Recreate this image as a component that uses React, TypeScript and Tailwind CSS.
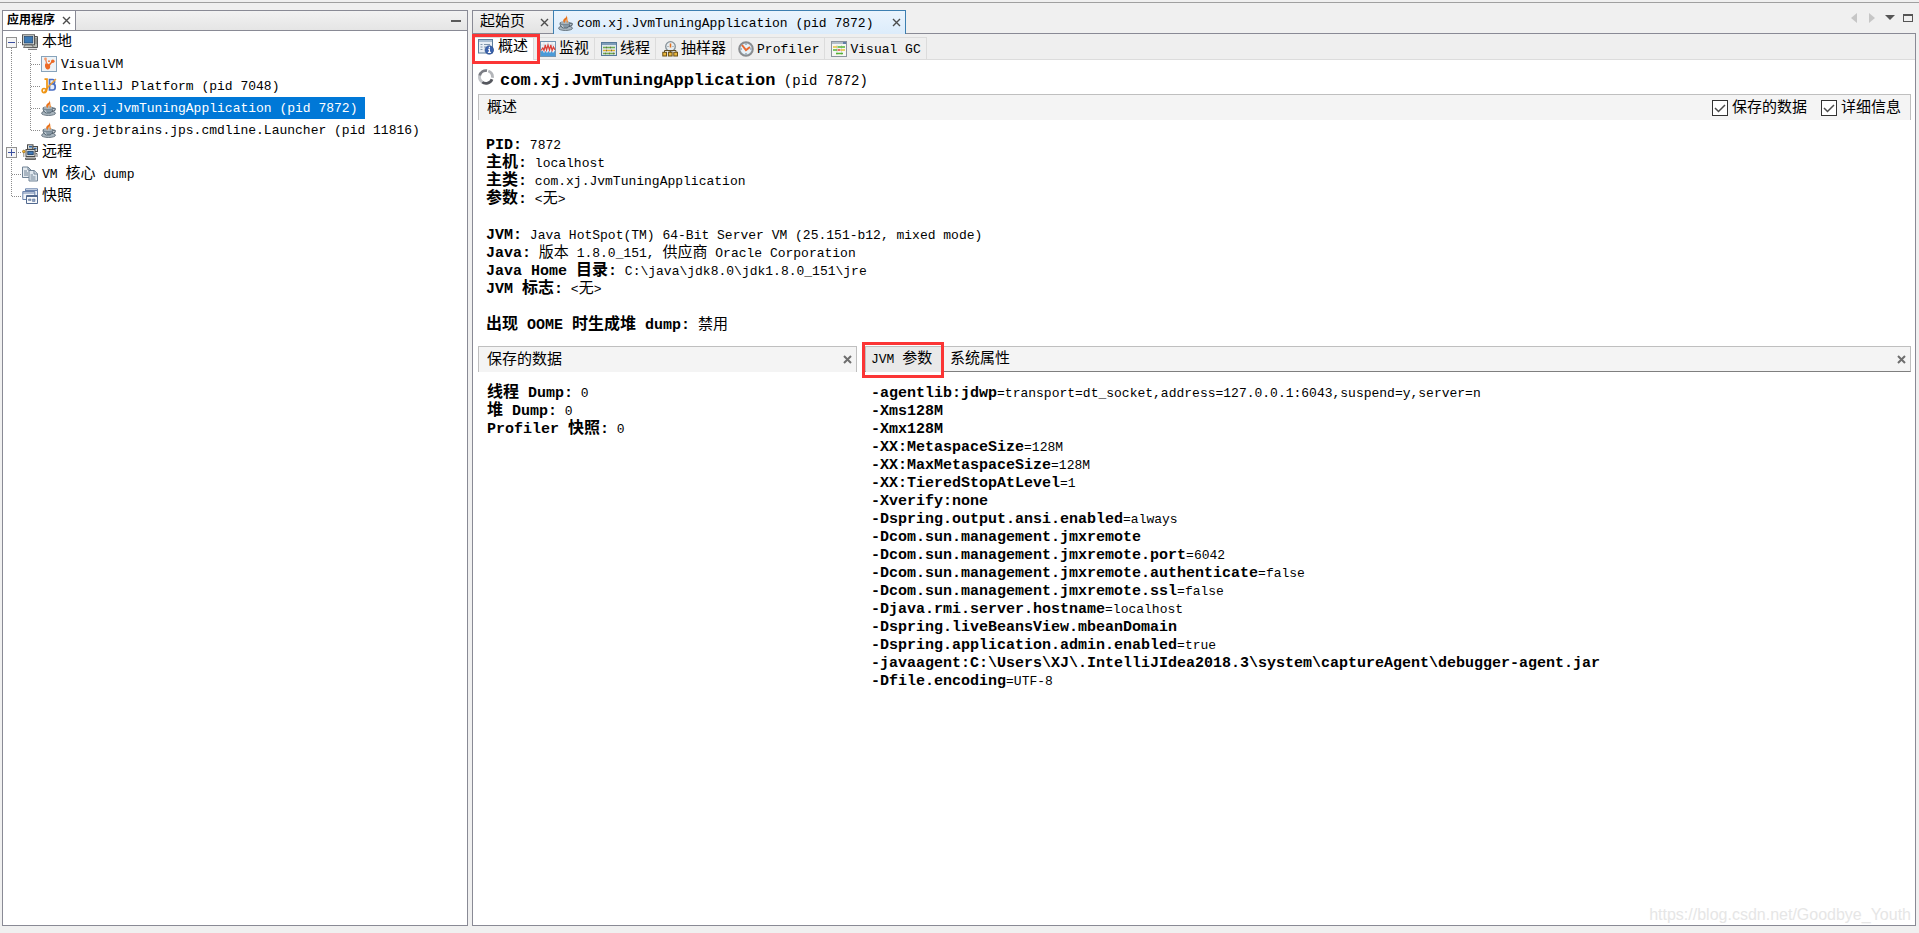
import type { ReactNode } from "react";
import clsx from "clsx";

const CJK = /([\u3000-\u30ff\u4e00-\u9fff\uff00-\uffef]+)/;

/* Latin runs keep the parent size, Chinese runs are a step larger */
function Mixed({ children, bold }: { children: string; bold?: boolean }) {
  return (
    <>
      {children.split(CJK).map((part, i) =>
        i % 2 ? (
          <span key={i} className={bold ? "text-base leading-none" : "text-[15px] leading-none"}>
            {part}
          </span>
        ) : (
          part
        )
      )}
    </>
  );
}

function Icon({ children, className }: { children: ReactNode; className?: string }) {
  return (
    <svg viewBox="0 0 16 16" className={clsx("size-4 shrink-0", className)} aria-hidden="true">
      {children}
    </svg>
  );
}

/* ── Icons ─────────────────────────────────────── */

const JavaIcon = () => (
  <Icon>
    <ellipse cx="7.500" cy="13.200" rx="7" ry="2.300" fill="#aab6bf" stroke="#55636e" strokeWidth=".8" />
    <path d="M11.500 8.300c3.800-1 3.800 2.400-.8 3" fill="none" stroke="#55636e" strokeWidth="1.200" />
    <path d="M2 7.800h10c.2 2.500-1.200 4.500-3 5.200H5C3.200 12.300 1.800 10.300 2 7.800z" fill="#8798a5" stroke="#4a5a67" strokeWidth=".8" />
    <ellipse cx="7" cy="8" rx="4.800" ry="1.200" fill="#c9d3da" stroke="#4a5a67" strokeWidth=".6" />
    <path d="M3.800 10.200c.4 1 .9 1.600 1.700 2" fill="none" stroke="#e3eaef" />
    <path d="M8 0c1.300 2-.5 2.700-2 4C4.600 5.300 5 6.800 6.800 8.200 6.500 6.800 7 6 8.300 5 9.800 3.700 9.500 1.500 8 0z" fill="#e8731c" />
    <path d="M10.500 3C8.300 4.300 7.800 5.300 8.600 6.400c.5.700.2 1.200-.4 1.900 1.800-.8 2.200-1.700 1.500-2.700-.5-.8-.2-1.600.8-2.600z" fill="#f08b35" />
  </Icon>
);

const LocalIcon = () => (
  <Icon>
    <path d="M12 2.500h3.500v11H5V12" fill="#b9bdb5" stroke="#555" />
    <path d="M13 5h2M13 7h2M13 9h2" stroke="#555" strokeWidth=".7" />
    <rect x=".5" y=".8" width="12" height="10" fill="#e2e4df" stroke="#555" />
    <rect x="2.200" y="2.500" width="8.600" height="6.500" fill="#3d7ab5" stroke="#1d3f66" strokeWidth=".7" />
    <path d="M3 11h7l1.500 2.500H1.500z" fill="#c9ccc5" stroke="#555" strokeWidth=".8" />
    <path d="M6 15.300h9" stroke="#666" />
  </Icon>
);

const RemoteIcon = () => (
  <Icon>
    <rect x="5.500" y=".8" width="5.500" height="4.500" fill="#dcdeda" stroke="#4a4a4a" />
    <rect x="11" y="2.500" width="4.500" height="5" fill="#dcdeda" stroke="#4a4a4a" />
    <path d="M7 2.800h3M12 4.500h2.500" stroke="#2f67a8" strokeWidth="1.500" />
    <rect x="4" y="5.500" width="9" height="7" fill="#e4e6e1" stroke="#4a4a4a" />
    <rect x="5.800" y="7.300" width="5.400" height="3.400" fill="#3f79b8" stroke="#17365c" strokeWidth=".8" />
    <path d="M3.500 14h10v1.500h-10z" fill="#b7bab3" stroke="#4a4a4a" strokeWidth=".8" />
    <path d="M13.500 9.500h1.500V13" fill="none" stroke="#666" />
    <path d="M1.800 8v5" stroke="#8a8a80" />
    <circle cx="1.800" cy="7.500" r="1.300" fill="#f4b32c" stroke="#9a6711" strokeWidth=".7" />
  </Icon>
);

const VisualVmIcon = () => (
  <Icon>
    <rect x=".5" y=".5" width="15" height="15" fill="#eef3f7" stroke="#87a3bb" />
    <path d="M4.500 7.500C5.500 7 7 7.500 7.800 8.300L10.500 5.500l1 .8L9 9.500c.8 2-.5 4.200-2.500 4C4.500 13.300 3.200 9.500 4.500 7.500z" fill="#ec6a26" />
    <circle cx="4.500" cy="3" r="1.400" fill="#f59a6c" />
    <circle cx="11.800" cy="5.200" r="1.800" fill="#ec6a26" />
    <circle cx="8" cy="5.200" r=".9" fill="#ec6a26" />
    <path d="M4.800 4l1 4" stroke="#f08450" strokeWidth="1.200" />
  </Icon>
);

const IntellijIcon = () => (
  <Icon>
    <path d="M8.500 1.500h3.200c2.400 0 2.600 4 .3 4.300 3 .2 3 6.200-.2 6.200H8.500zM9 5.800h3" fill="#e6edfb" stroke="#4b6fc4" strokeWidth="1.700" />
    <path d="M15 1L7.500 8.500 3.500 14" fill="none" stroke="#f0a030" strokeWidth="1.300" />
    <path d="M3.500 1.200H6v8.300c0 2.500-.8 5.200-3 5.200-2.500 0-2.500-4.200 0-4.200 1.500 0 2 1 3 1.500" fill="none" stroke="#ef9412" strokeWidth="1.700" />
  </Icon>
);

const CoreDumpIcon = () => (
  <Icon>
    <path d="M.5 1h5.500l3 3v7.500H.5z" fill="#e5ebf0" stroke="#708395" />
    <path d="M6 1v3h3M2 5h3M2 7h4M2 9h4" fill="none" stroke="#708395" />
    <path d="M7 4.500h5.200l3.300 3.200V15H7z" fill="#e0e8ef" stroke="#708395" />
    <path d="M12 4.500V8h3.500M8.500 9H11M8.500 11h5M8.500 13h5" fill="none" stroke="#708395" />
  </Icon>
);

const SnapshotIcon = () => (
  <Icon>
    <path d="M3.500.8h12v9h-12z" fill="#e8eef6" stroke="#6a83ad" />
    <path d="M3.500 2.500h12" stroke="#6a83ad" />
    <path d="M.8 3.500h12v8H.8z" fill="#f0f4f9" stroke="#6a83ad" />
    <path d="M.8 5h12" stroke="#6a83ad" />
    <path d="M4.500 7.500h11v8h-11z" fill="#f7f9fb" stroke="#52698f" />
    <path d="M4.500 8.500h11" stroke="#52698f" />
    <path d="M6.500 11h2.500v1.500H6.500zM10.500 11H13v2.500h-2.500z" fill="#8fa4c4" stroke="#52698f" strokeWidth=".5" />
  </Icon>
);

const OverviewIcon = () => (
  <Icon>
    <rect x=".5" y=".5" width="14" height="13.500" fill="#e9eff5" stroke="#5d7d9c" />
    <path d="M1 2h13" stroke="#a9bed2" strokeWidth="2" />
    <path d="M2.500 5.500h2M6 5.500h6M2.500 8h2M6 8h2M2.500 10.500h2" stroke="#8096ab" />
    <circle cx="11.300" cy="11" r="4.300" fill="#3a62ad" stroke="#274a86" strokeWidth=".6" />
    <path d="M11.400 7.800v1.400M10.200 10.400h1.200v3M9.900 13.400h3" stroke="#fff" strokeWidth="1.200" fill="none" />
  </Icon>
);

const MonitorIcon = () => (
  <Icon>
    <rect x=".5" y=".5" width="15" height="15" fill="#f2f5f8" stroke="#7394b2" />
    <path d="M4 1v9M8 1v9M12 1v9M1 4h14M1 7h14" stroke="#c9d4de" strokeWidth=".6" />
    <path d="M1 15v-4.500l1.500-1L4 12l1.500-2L7 12l1.500-2 1.500 2 1.500-2 1.500 2 2-2.500V15z" fill="#4b9bd8" />
    <path d="M1 9.500L2.800 7 4 9.500 5.300 4l1.200 5L8 4l1.500 5 1.300-5 1.300 5.500L13.500 6 15 9" fill="none" stroke="#dd3f38" strokeWidth="1.200" />
  </Icon>
);

const ThreadsIcon = () => (
  <Icon>
    <rect x=".5" y="1.500" width="15" height="13" fill="#dfe7ee" stroke="#56799a" />
    <path d="M1 3h14" stroke="#7d9cb8" strokeWidth="2" />
    <path d="M2 6.500h12M2 12.500h12" stroke="#6fae4e" strokeWidth="1.400" />
    <path d="M2 9.500h12" stroke="#e3b12e" strokeWidth="1.400" />
    <path d="M5 6.500h1M9 6.500h1M5 9.500h1M10 9.500h1M4 12.500h1M8 12.500h1M12 12.500h1" stroke="#6d6a45" strokeWidth="1.400" />
  </Icon>
);

const SamplerIcon = () => (
  <Icon>
    <circle cx="8.500" cy="5.500" r="4.800" fill="#e6ecef" stroke="#848f96" strokeWidth="1.300" />
    <path d="M5.500 5.500h1M10.500 5.500h1" stroke="#7d8890" />
    <path d="M8.500 2.500v4" stroke="#e0701d" strokeWidth="1.500" />
    <path d="M2.500 11V9.500h11.500V11M8.300 9v3" fill="none" stroke="#5d4a20" />
    <rect x=".8" y="11.300" width="3.700" height="3.700" fill="#eab73c" stroke="#6b4e12" />
    <rect x="6.400" y="11.300" width="3.700" height="3.700" fill="#eab73c" stroke="#6b4e12" />
    <rect x="11.800" y="11.300" width="3.700" height="3.700" fill="#eab73c" stroke="#6b4e12" />
  </Icon>
);

const ProfilerIcon = () => (
  <Icon>
    <circle cx="8" cy="8" r="6.800" fill="#d6e4ef" stroke="#8a8d90" strokeWidth="2" />
    <circle cx="8" cy="8" r="5" fill="#e9f2f8" />
    <path d="M8 2.500v1.500M8 12v1.500M2.500 8H4M12 8h1.500" stroke="#6b8196" />
    <path d="M4 4l4 5 4-3" fill="none" stroke="#ea6a30" strokeWidth="2" />
  </Icon>
);

const VisualGcIcon = () => (
  <Icon>
    <rect x=".5" y=".5" width="15" height="15" fill="#f7f7f4" stroke="#8b949d" />
    <path d="M1 2h11" stroke="#b4c0cb" strokeWidth="2" />
    <path d="M12 2h3" stroke="#5f7fa8" strokeWidth="2" />
    <path d="M6 4v10M10.500 4v10" stroke="#d9d9d4" />
    <path d="M2 6h4" stroke="#e8c13a" strokeWidth="1.500" />
    <path d="M6.500 6H14M2 9h4" stroke="#54b536" strokeWidth="1.500" />
    <path d="M6.500 9h3" stroke="#e04a3c" strokeWidth="1.500" />
    <path d="M10 9h4" stroke="#e8c13a" strokeWidth="1.500" />
    <path d="M5 12.500h7" stroke="#54b536" strokeWidth="1.500" />
  </Icon>
);

const SpinnerIcon = () => (
  <Icon>
    <g fill="none" strokeWidth="2.800">
      <path d="M14 10.200A6.400 6.400 0 0 1 4 13" stroke="#55575e" />
      <path d="M4.300 13.200A6.400 6.400 0 0 1 1.800 6" stroke="#c2c4c8" />
      <path d="M1.700 6.500A6.400 6.400 0 0 1 9 1.700" stroke="#7b7d84" />
      <path d="M10.300 2A6.400 6.400 0 0 1 14.400 8.800" stroke="#b3b5b9" />
    </g>
  </Icon>
);

function CloseButton({ heavy, label }: { heavy?: boolean; label: string }) {
  return (
    <button aria-label={label} className="mr-px grid size-4 shrink-0 place-items-center">
      <svg viewBox="0 0 9 9" className="size-[9px]" aria-hidden="true">
        <path d="M1 1l7 7M8 1L1 8" stroke={heavy ? "#6e6e6e" : "#4c4c4c"} strokeWidth={heavy ? 2 : 1.4} />
      </svg>
    </button>
  );
}

/* ── Applications tree ─────────────────────────── */

type Node = {
  label: string;
  icon: ReactNode;
  depth: 0 | 1;
  toggle?: "+" | "-";
  last?: boolean;
  selected?: boolean;
};

const nodes: Node[] = [
  { label: "本地", icon: <LocalIcon />, depth: 0, toggle: "-" },
  { label: "VisualVM", icon: <VisualVmIcon />, depth: 1 },
  { label: "IntelliJ Platform (pid 7048)", icon: <IntellijIcon />, depth: 1 },
  { label: "com.xj.JvmTuningApplication (pid 7872)", icon: <JavaIcon />, depth: 1, selected: true },
  { label: "org.jetbrains.jps.cmdline.Launcher (pid 11816)", icon: <JavaIcon />, depth: 1, last: true },
  { label: "远程", icon: <RemoteIcon />, depth: 0, toggle: "+" },
  { label: "VM 核心 dump", icon: <CoreDumpIcon />, depth: 0 },
  { label: "快照", icon: <SnapshotIcon />, depth: 0, last: true },
];

function Guides({ node, first }: { node: Node; first: boolean }) {
  const child = node.depth === 1;
  const width = child ? 38 : 19;
  const x = child ? 27.5 : 8.5;
  return (
    <svg width={width} height="22" className="shrink-0" aria-hidden="true" shapeRendering="crispEdges">
      <g stroke="#8c8c8c" strokeDasharray="1 1" fill="none">
        {child && <path d="M8.5 0v22" />}
        <path d={`M${x} ${first ? 11 : 0}V${node.last ? 11 : 22}`} />
        <path d={`M${x} 11.5H${width - 1}`} />
      </g>
      {node.toggle && (
        <g>
          <rect x="3.500" y="6.500" width="10" height="10" fill="#f4f4f4" stroke="#919191" />
          <path d="M5 11.500h7" stroke="#3b4fa0" />
          {node.toggle === "+" && <path d="M8.500 8v7" stroke="#3b4fa0" />}
        </g>
      )}
    </svg>
  );
}

function Applications() {
  return (
    <aside className="flex w-[466px] shrink-0 flex-col border border-[#898a95] bg-white">
      <div className="flex h-5 items-stretch border-b border-[#898a95] bg-linear-to-b from-[#f2f2f2] to-[#e5e5e5]">
        <div className="flex w-[73px] items-center gap-[3px] border-r border-[#898a95] bg-white pl-1">
          <span className="text-xs font-bold">应用程序</span>
          <CloseButton label="关闭应用程序" />
        </div>
        <button aria-label="最小化" className="mr-[3px] ml-auto grid w-4 place-items-center">
          <span className="h-0.5 w-2.5 bg-[#5a5a5a]" />
        </button>
      </div>
      <ul className="text-[13px]">
        {nodes.map((node, i) => (
          <li key={node.label} className="flex h-[22px] items-center">
            <Guides node={node} first={i === 0} />
            {node.icon}
            <button
              className={clsx(
                "ml-[3px] h-[22px] pr-2 pl-px leading-6 whitespace-nowrap",
                node.selected && "bg-[#0078d7] text-white"
              )}
            >
              <Mixed>{node.label}</Mixed>
            </button>
          </li>
        ))}
      </ul>
    </aside>
  );
}

/* ── Main window ───────────────────────────────── */

const views = [
  { label: "概述", icon: <OverviewIcon />, active: true },
  { label: "监视", icon: <MonitorIcon /> },
  { label: "线程", icon: <ThreadsIcon /> },
  { label: "抽样器", icon: <SamplerIcon /> },
  { label: "Profiler", icon: <ProfilerIcon /> },
  { label: "Visual GC", icon: <VisualGcIcon /> },
];

const details: ([string, string] | null)[] = [
  ["PID:", "7872"],
  ["主机:", "localhost"],
  ["主类:", "com.xj.JvmTuningApplication"],
  ["参数:", "<无>"],
  null,
  ["JVM:", "Java HotSpot(TM) 64-Bit Server VM (25.151-b12, mixed mode)"],
  ["Java:", "版本 1.8.0_151, 供应商 Oracle Corporation"],
  ["Java Home 目录:", "C:\\java\\jdk8.0\\jdk1.8.0_151\\jre"],
  ["JVM 标志:", "<无>"],
  null,
  ["出现 OOME 时生成堆 dump:", "禁用"],
];

const saved: [string, string][] = [
  ["线程 Dump:", "0"],
  ["堆 Dump:", "0"],
  ["Profiler 快照:", "0"],
];

const jvmArgs: [string, string?][] = [
  ["-agentlib:jdwp", "transport=dt_socket,address=127.0.0.1:6043,suspend=y,server=n"],
  ["-Xms128M"],
  ["-Xmx128M"],
  ["-XX:MetaspaceSize", "128M"],
  ["-XX:MaxMetaspaceSize", "128M"],
  ["-XX:TieredStopAtLevel", "1"],
  ["-Xverify:none"],
  ["-Dspring.output.ansi.enabled", "always"],
  ["-Dcom.sun.management.jmxremote"],
  ["-Dcom.sun.management.jmxremote.port", "6042"],
  ["-Dcom.sun.management.jmxremote.authenticate", "false"],
  ["-Dcom.sun.management.jmxremote.ssl", "false"],
  ["-Djava.rmi.server.hostname", "localhost"],
  ["-Dspring.liveBeansView.mbeanDomain"],
  ["-Dspring.application.admin.enabled", "true"],
  ["-javaagent:C:\\Users\\XJ\\.IntelliJIdea2018.3\\system\\captureAgent\\debugger-agent.jar"],
  ["-Dfile.encoding", "UTF-8"],
];

function Line({ name, value, sep = " " }: { name: string; value?: string; sep?: string }) {
  return (
    <div className="h-[18px] leading-5 whitespace-nowrap">
      <b className="text-[15px]">
        <Mixed bold>{name}</Mixed>
      </b>
      {value !== undefined && (
        <>
          {sep}
          <Mixed>{value}</Mixed>
        </>
      )}
    </div>
  );
}

function Check({ label }: { label: string }) {
  return (
    <label className="flex items-center gap-1 text-[15px]">
      <span className="grid size-4">
        <input
          type="checkbox"
          defaultChecked
          className="peer col-start-1 row-start-1 size-4 appearance-none border border-[#333] bg-white"
        />
        <svg viewBox="0 0 16 16" className="pointer-events-none col-start-1 row-start-1 hidden size-4 peer-checked:block" aria-hidden="true">
          <path d="M3 8l3.500 3.500L13 5" fill="none" stroke="#4a4a4a" strokeWidth="1.500" />
        </svg>
      </span>
      <span className="pt-0.5 leading-5">{label}</span>
    </label>
  );
}

/* red marker frame drawn over a tab */
function Marker({ className }: { className: string }) {
  return <span className={clsx("pointer-events-none absolute z-10 border-3 border-[#fb3535]", className)} />;
}

function DocumentTabs() {
  return (
    <div className="flex h-6 items-stretch">
      <div className="flex w-[81px] items-center justify-between border border-r-0 border-[#898a95] bg-linear-to-b from-[#f2f2f2] to-[#e3e3e3] pl-[7px]">
        <button className="pt-0.5 text-[15px] leading-5">起始页</button>
        <CloseButton label="关闭起始页" />
      </div>
      <div className="flex w-[353px] items-center border border-b-0 border-[#3c7fb1] bg-linear-to-b from-[#eaf4fd] to-[#dcecfb] pl-1">
        <JavaIcon />
        <button className="ml-[3px] pt-0.5 text-[13px] leading-5">com.xj.JvmTuningApplication (pid 7872)</button>
        <span className="ml-auto flex">
          <CloseButton label="关闭 com.xj.JvmTuningApplication" />
        </span>
      </div>
      <div className="flex grow items-center justify-end gap-2 border-b border-[#898a95] pb-2">
        <button aria-label="上一个" className="grid w-2.5 place-items-center">
          <svg viewBox="0 0 6 10" className="h-2.5 w-1.5"><path d="M6 0v10L0 5z" fill="#c6c6c6" /></svg>
        </button>
        <button aria-label="下一个" className="grid w-2.5 place-items-center">
          <svg viewBox="0 0 6 10" className="h-2.5 w-1.5"><path d="M0 0v10l6-5z" fill="#c6c6c6" /></svg>
        </button>
        <button aria-label="文档列表" className="grid w-2.5 place-items-center">
          <svg viewBox="0 0 10 5" className="h-[5px] w-2.5"><path d="M0 0h10L5 5z" fill="#555" /></svg>
        </button>
        <button aria-label="最大化" className="mr-[3px] h-2 w-2.5 border border-t-2 border-[#555]" />
      </div>
    </div>
  );
}

function ViewTabs() {
  return (
    <nav className="flex h-[26px] items-stretch border-b border-[#dcdcdc] bg-[#efefef] pt-[3px] pl-px">
      {views.map((view) => (
        <button
          key={view.label}
          className={clsx(
            "relative flex items-center border-t border-r border-[#dcdcdc] pr-[5px] text-[15px]",
            view.active ? "-mb-px gap-1 bg-white pb-1 pl-1" : "gap-[3px] pl-1.5"
          )}
        >
          {view.icon}
          <span className={clsx("pt-0.5 leading-5 whitespace-nowrap", /^[A-Z]/.test(view.label) && "text-[13px]")}>
            {view.label}
          </span>
          {view.active && <Marker className="-top-1 -left-0.5 h-[30px] w-[68px]" />}
        </button>
      ))}
    </nav>
  );
}

function Main() {
  return (
    <main className="flex min-w-0 grow flex-col">
      <DocumentTabs />
      <div className="relative flex grow flex-col border border-t-0 border-[#898a95] bg-white">
        <ViewTabs />

        <h1 className="flex h-[34px] items-center gap-1.5 pl-[5px] text-sm">
          <SpinnerIcon />
          <span className="pt-2 leading-5">
            <b className="text-[17px] leading-5">com.xj.JvmTuningApplication</b> (pid 7872)
          </span>
        </h1>

        <div className="mr-1 ml-[5px]">
          <div className="flex h-[26px] items-center gap-[14px] border border-b-0 border-[#bfbfbf] bg-[#f4f4f4] pr-[9px] pl-2">
            <h2 className="mr-auto pt-0.5 text-[15px] leading-5">概述</h2>
            <Check label="保存的数据" />
            <Check label="详细信息" />
          </div>
          <div className="h-[226px] pt-4 pl-2">
            {details.map((row, i) =>
              row ? <Line key={i} name={row[0]} value={row[1]} /> : <div key={i} className="h-[18px]" />
            )}
          </div>

          <div className="grid grid-cols-[379px_1fr] gap-2">
            <section>
              <div className="flex h-[26px] items-center justify-between border border-b-0 border-[#bfbfbf] bg-[#f4f4f4] pl-2">
                <h2 className="pt-0.5 text-[15px] leading-5">保存的数据</h2>
                <CloseButton heavy label="关闭保存的数据" />
              </div>
              <div className="pt-3 pl-[9px]">
                {saved.map(([name, value]) => (
                  <Line key={name} name={name} value={value} />
                ))}
              </div>
            </section>

            <section>
              <div className="flex h-[26px] items-stretch border border-b-[#7f7f7f] border-[#bfbfbf] bg-[#f4f4f4]">
                <button className="relative -mb-px w-[76px] border-r border-[#7f7f7f] bg-[#e9e9e9] pl-[5px] text-left text-[13px] leading-6">
                  <Mixed>JVM 参数</Mixed>
                  <Marker className="-top-[5px] -left-1 h-9 w-[82px]" />
                </button>
                <button className="pt-0.5 pl-2 text-[15px] leading-5">系统属性</button>
                <span className="ml-auto flex items-center">
                  <CloseButton heavy label="关闭 JVM 参数" />
                </span>
              </div>
              <div className="pt-3 pl-1.5">
                {jvmArgs.map(([name, value]) => (
                  <Line key={name} name={name} value={value} sep="=" />
                ))}
              </div>
            </section>
          </div>
        </div>

        <a
          href="https://blog.csdn.net/Goodbye_Youth"
          className="absolute right-1 bottom-0 font-['Liberation_Sans',sans-serif] text-base leading-5 text-[#e6e6e6]"
        >
          https://blog.csdn.net/Goodbye_Youth
        </a>
      </div>
    </main>
  );
}

export default function App() {
  return (
    <div className="flex h-screen flex-col bg-[#f0f0f0] font-['Liberation_Mono','Noto_Sans_CJK_SC',monospace] text-[13px] text-black">
      <div className="h-[3px] shrink-0 border-b border-[#a0a0a0]" />
      <div className="flex min-h-0 grow gap-1 pt-[7px] pr-[3px] pb-[7px] pl-0.5">
        <Applications />
        <Main />
      </div>
    </div>
  );
}
